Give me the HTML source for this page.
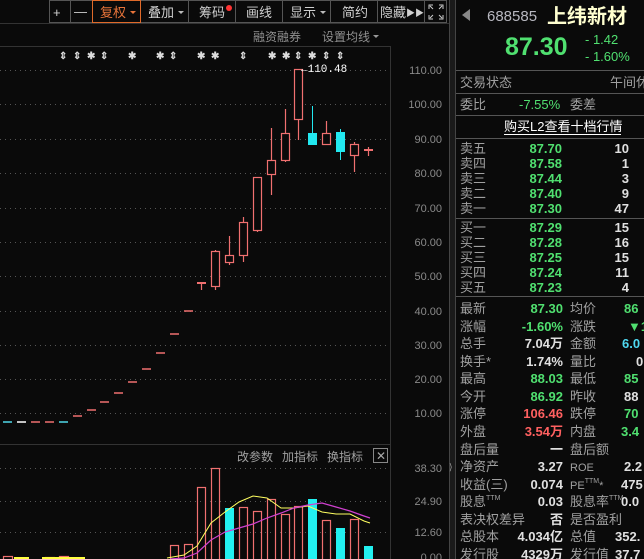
<!DOCTYPE html>
<html><head><meta charset="utf-8"><style>
body{margin:0;background:#0a0a0a;width:644px;height:559px;overflow:hidden;font-family:"Liberation Sans","Noto Sans CJK SC",sans-serif;}
svg text{font-family:"Liberation Sans","Noto Sans CJK SC",sans-serif;}
.m{font-family:"Liberation Mono","Noto Sans CJK SC",monospace;}
</style></head><body>
<svg width="644" height="559" xmlns="http://www.w3.org/2000/svg" style="position:absolute;left:0;top:0">
<rect width="644" height="559" fill="#0a0a0a"/>
<!-- toolbar -->
<g stroke="#555" fill="none">
<rect x="49.5" y="0.5" width="397" height="22"/>
<line x1="70.5" y1="0" x2="70.5" y2="23"/><line x1="92.5" y1="0" x2="92.5" y2="23"/>
<line x1="140.5" y1="0" x2="140.5" y2="23"/><line x1="188.5" y1="0" x2="188.5" y2="23"/>
<line x1="235.5" y1="0" x2="235.5" y2="23"/><line x1="282.5" y1="0" x2="282.5" y2="23"/>
<line x1="330.5" y1="0" x2="330.5" y2="23"/><line x1="377.5" y1="0" x2="377.5" y2="23"/>
<line x1="424.5" y1="0" x2="424.5" y2="23"/>
</g>
<rect x="92.5" y="0.5" width="48" height="22" fill="none" stroke="#e06a2a"/>
<g font-size="13" fill="#d0d0d0">
<text x="53" y="17">+</text><text x="74" y="16">—</text>
<text x="100" y="17" fill="#e8743a">复权</text><polygon points="130,11 136,11 133,14" fill="#e8743a"/>
<text x="148" y="17">叠加</text><polygon points="178,11 184,11 181,14" fill="#bbb"/>
<text x="199" y="17">筹码</text><circle cx="229" cy="8" r="3" fill="#f33"/>
<text x="246" y="17">画线</text>
<text x="290" y="17">显示</text><polygon points="320,11 326,11 323,14" fill="#bbb"/>
<text x="342" y="17">简约</text>
<text x="380" y="17">隐藏</text><text x="406" y="16" font-size="9">▶▶</text>
</g>
<g stroke="#ccc" stroke-width="1" fill="none"><path d="M429 9V5h4M443 9V5h-4M429 15v4h4M443 15v4h-4M430 6l3 3M442 6l-3 3M430 18l3-3M442 18l-3-3"/></g>
<line x1="0" y1="23.5" x2="449" y2="23.5" stroke="#333"/>
<text x="253" y="41" font-size="12" fill="#909090">融资融券</text>
<text x="322" y="41" font-size="12" fill="#909090">设置均线</text><polygon points="373,35 379,35 376,38" fill="#999"/>
<line x1="0" y1="46.5" x2="390" y2="46.5" stroke="#333"/>
<line x1="390.5" y1="46" x2="390.5" y2="559" stroke="#333"/>
<!-- markers -->
<g font-size="10" fill="#ddd" font-weight="bold">
<text x="59" y="59">⇕</text><text x="73" y="59">⇕</text><text x="87" y="59">✱</text><text x="100" y="59">⇕</text>
<text x="128" y="59">✱</text><text x="156" y="59">✱</text><text x="169" y="59">⇕</text><text x="197" y="59">✱</text><text x="211" y="59">✱</text>
<text x="239" y="59">⇕</text><text x="268" y="59">✱</text><text x="282" y="59">✱</text><text x="294" y="59">⇕</text><text x="308" y="59">✱</text><text x="322" y="59">⇕</text><text x="336" y="59">⇕</text>
</g>
<!-- grid -->
<g stroke="#555" stroke-dasharray="1,4">
<line x1="0" y1="70.5" x2="390" y2="70.5"/><line x1="0" y1="104.5" x2="390" y2="104.5"/><line x1="0" y1="139.5" x2="390" y2="139.5"/>
<line x1="0" y1="173.5" x2="390" y2="173.5"/><line x1="0" y1="208.5" x2="390" y2="208.5"/><line x1="0" y1="242.5" x2="390" y2="242.5"/>
<line x1="0" y1="276.5" x2="390" y2="276.5"/><line x1="0" y1="311.5" x2="390" y2="311.5"/><line x1="0" y1="345.5" x2="390" y2="345.5"/>
<line x1="0" y1="379.5" x2="390" y2="379.5"/><line x1="0" y1="413.5" x2="390" y2="413.5"/>
<line x1="0" y1="468.5" x2="390" y2="468.5"/><line x1="0" y1="501.5" x2="390" y2="501.5"/><line x1="0" y1="532.5" x2="390" y2="532.5"/>
</g>
<g font-size="11" fill="#8a8a8a" class="m" text-anchor="end">
<text x="442" y="74">110.00</text><text x="442" y="108">100.00</text><text x="442" y="143">90.00</text><text x="442" y="177">80.00</text>
<text x="442" y="212">70.00</text><text x="442" y="246">60.00</text><text x="442" y="280">50.00</text><text x="442" y="315">40.00</text>
<text x="442" y="349">30.00</text><text x="442" y="383">20.00</text><text x="442" y="417">10.00</text>
<text x="442" y="472">38.30</text><text x="442" y="505">24.90</text><text x="442" y="536">12.60</text><text x="442" y="561">0.00</text>
</g>
<!-- dashes -->
<g stroke-width="1.5">
<line x1="3" y1="422" x2="12" y2="422" stroke="#4fd8e8"/><line x1="17" y1="422" x2="26" y2="422" stroke="#fff"/>
<line x1="31" y1="422" x2="40" y2="422" stroke="#f07070"/><line x1="45" y1="422" x2="54" y2="422" stroke="#f07070"/>
<line x1="59" y1="422" x2="68" y2="422" stroke="#4fd8e8"/>
<g stroke="#f07070"><line x1="73" y1="416" x2="82" y2="416"/><line x1="87" y1="410" x2="96" y2="410"/><line x1="100" y1="402" x2="109" y2="402"/>
<line x1="114" y1="393" x2="123" y2="393"/><line x1="128" y1="382" x2="137" y2="382"/><line x1="142" y1="369" x2="151" y2="369"/>
<line x1="156" y1="353" x2="165" y2="353"/><line x1="170" y1="334" x2="179" y2="334"/><line x1="184" y1="311" x2="193" y2="311"/></g>
</g>
<!-- candles -->
<g stroke="#f07070" fill="none" stroke-width="1.2">
<line x1="197" y1="283" x2="206" y2="283" stroke-width="2"/><line x1="201.5" y1="283" x2="201.5" y2="290"/>
<line x1="215.5" y1="250" x2="215.5" y2="290"/><rect x="211.5" y="251.5" width="8" height="35" fill="#0a0a0a"/>
<line x1="229.5" y1="236" x2="229.5" y2="265"/><rect x="225.5" y="255.5" width="8" height="7" fill="#0a0a0a"/>
<line x1="243.5" y1="217" x2="243.5" y2="262"/><rect x="239.5" y="222.5" width="8" height="33" fill="#0a0a0a"/>
<line x1="257.5" y1="177" x2="257.5" y2="232"/><rect x="253.5" y="177.5" width="8" height="53" fill="#0a0a0a"/>
<line x1="271.5" y1="128" x2="271.5" y2="195"/><rect x="267.5" y="160.5" width="8" height="14" fill="#0a0a0a"/>
<line x1="285.5" y1="109" x2="285.5" y2="162"/><rect x="281.5" y="133.5" width="8" height="27" fill="#0a0a0a"/>
<line x1="298.5" y1="69" x2="298.5" y2="140"/><rect x="294.5" y="69.5" width="8" height="50" fill="#0a0a0a"/>
<line x1="326.5" y1="121" x2="326.5" y2="145"/><rect x="322.5" y="133.5" width="8" height="11" fill="#0a0a0a"/>
<line x1="354.5" y1="142" x2="354.5" y2="172"/><rect x="350.5" y="144.5" width="8" height="11" fill="#0a0a0a"/>
<line x1="364" y1="150" x2="373" y2="150" stroke-width="2"/><line x1="368.5" y1="147" x2="368.5" y2="156"/>
</g>
<line x1="312.5" y1="106" x2="312.5" y2="145" stroke="#22e8f0"/><rect x="308" y="133" width="9" height="12" fill="#22e8f0"/>
<line x1="340.5" y1="129" x2="340.5" y2="160" stroke="#22e8f0"/><rect x="336" y="132" width="9" height="20" fill="#22e8f0"/>
<text x="301" y="72" font-size="11" fill="#fff" class="m">←110.48</text>
<!-- volume pane -->
<line x1="0" y1="444.5" x2="390" y2="444.5" stroke="#333"/>
<g font-size="12" fill="#a0a0a0"><text x="237" y="461">改参数</text><text x="282" y="461">加指标</text><text x="327" y="461">换指标</text></g>
<rect x="373.5" y="448.5" width="14" height="14" fill="none" stroke="#888"/><text x="376" y="460" font-size="12" fill="#aaa">✕</text>
<g stroke="#f07070" fill="none" stroke-width="1.2">
<rect x="3.5" y="556.5" width="9" height="5"/><rect x="45.5" y="557.5" width="9" height="5"/><rect x="59.5" y="556.5" width="9" height="5"/>
<rect x="170.5" y="545.5" width="8" height="16"/><rect x="184.5" y="544.5" width="8" height="16"/>
<rect x="197.5" y="487.5" width="8" height="74"/><rect x="211.5" y="468.5" width="8" height="93"/>
<rect x="239.5" y="507.5" width="8" height="54"/><rect x="253.5" y="511.5" width="8" height="50"/>
<rect x="267.5" y="499.5" width="8" height="62"/><rect x="281.5" y="514.5" width="8" height="47"/>
<rect x="294.5" y="506.5" width="8" height="55"/><rect x="322.5" y="520.5" width="8" height="41"/>
<rect x="350.5" y="519.5" width="8" height="42"/>
</g>
<g fill="#22f0f0"><rect x="225" y="508" width="9" height="51"/><rect x="308" y="499" width="9" height="60"/><rect x="336" y="528" width="9" height="31"/><rect x="364" y="546" width="9" height="13"/></g>
<g stroke="#ffff40" stroke-width="2"><line x1="14" y1="558" x2="29" y2="558"/><line x1="42" y1="558" x2="85" y2="558"/></g>
<polyline points="167,558 184,555 197,546 211,523 225,512 239,502 253,496 267,498 281,508 294,508 308,506 322,512 336,514 350,514 364,521 370,523" fill="none" stroke="#ffff60" stroke-width="1"/>
<polyline points="170,559 184,558 197,553 211,540 225,532 239,528 253,524 267,518 281,513 294,508 308,505 322,503 336,507 350,511 364,516 370,518" fill="none" stroke="#d040d0" stroke-width="1.2"/>
<!-- right panel border -->
<rect x="449" y="0" width="6" height="559" fill="#1a1a1a"/>
<line x1="449.5" y1="0" x2="449.5" y2="559" stroke="#444"/><line x1="455.5" y1="0" x2="455.5" y2="559" stroke="#444"/>
<text x="449" y="470" font-size="9" fill="#999">⟩</text>
<polygon points="462,15 470,9 470,21" fill="#888"/>
<text x="487" y="21" font-size="15" fill="#b8b8c0">688585</text>
<text x="547" y="23" font-size="20" fill="#ffffd0" font-weight="bold">上纬新材</text>
<text x="505" y="55" font-size="25" fill="#50e070" font-weight="bold">87.30</text>
<g font-size="13" fill="#50e070"><text x="585" y="44">- 1.42</text><text x="585" y="61">- 1.60%</text></g>
<g stroke="#555"><line x1="456" y1="70.5" x2="644" y2="70.5"/><line x1="456" y1="93.5" x2="644" y2="93.5"/><line x1="456" y1="115.5" x2="644" y2="115.5"/><line x1="456" y1="138.5" x2="644" y2="138.5"/><line x1="456" y1="218.5" x2="644" y2="218.5"/><line x1="456" y1="296.5" x2="644" y2="296.5"/></g>
<g font-size="13" fill="#a0a0a0"><text x="460" y="87">交易状态</text><text x="610" y="87">午间休</text><text x="460" y="109">委比</text><text x="570" y="109">委差</text></g>
<text x="519" y="109" font-size="13" fill="#50e070">-7.55%</text>
<text x="504" y="131" font-size="13" fill="#fff">购买L2查看十档行情</text><line x1="504" y1="134.5" x2="621" y2="134.5" stroke="#fff"/>
<g font-size="13" fill="#a0a0a0">
<text x="460" y="153">卖五</text><text x="460" y="168">卖四</text><text x="460" y="183">卖三</text><text x="460" y="198">卖二</text><text x="460" y="213">卖一</text>
<text x="460" y="232">买一</text><text x="460" y="247">买二</text><text x="460" y="262">买三</text><text x="460" y="277">买四</text><text x="460" y="292">买五</text>
</g>
<g font-size="13" fill="#50e070" text-anchor="end" class="m" font-weight="bold">
<text x="562" y="153">87.70</text><text x="562" y="168">87.58</text><text x="562" y="183">87.44</text><text x="562" y="198">87.40</text><text x="562" y="213">87.30</text>
<text x="562" y="232">87.29</text><text x="562" y="247">87.28</text><text x="562" y="262">87.25</text><text x="562" y="277">87.24</text><text x="562" y="292">87.23</text>
</g>
<g font-size="13" fill="#e0e0e0" text-anchor="end" class="m" font-weight="bold">
<text x="629" y="153">10</text><text x="629" y="168">1</text><text x="629" y="183">3</text><text x="629" y="198">9</text><text x="629" y="213">47</text>
<text x="629" y="232">15</text><text x="629" y="247">16</text><text x="629" y="262">15</text><text x="629" y="277">11</text><text x="629" y="292">4</text>
</g>
<g font-size="13" fill="#a0a0a0">
<text x="460" y="313">最新</text><text x="460" y="331">涨幅</text><text x="460" y="348">总手</text><text x="460" y="366">换手*</text><text x="460" y="383">最高</text>
<text x="460" y="401">今开</text><text x="460" y="418">涨停</text><text x="460" y="436">外盘</text><text x="460" y="454">盘后量</text><text x="460" y="471">净资产</text>
<text x="460" y="489">收益(三)</text><text x="460" y="506">股息<tspan font-size="7" dy="-6">TTM</tspan></text><text x="460" y="524">表决权差异</text><text x="460" y="541">总股本</text><text x="460" y="559">发行股</text>
<text x="570" y="313">均价</text><text x="570" y="331">涨跌</text><text x="570" y="348">金额</text><text x="570" y="366">量比</text><text x="570" y="383">最低</text>
<text x="570" y="401">昨收</text><text x="570" y="418">跌停</text><text x="570" y="436">内盘</text><text x="570" y="454">盘后额</text><text x="570" y="471" font-size="11">ROE</text>
<text x="570" y="489" font-size="11">PE<tspan font-size="7" dy="-6">TTM</tspan><tspan dy="6">*</tspan></text><text x="570" y="506">股息率<tspan font-size="7" dy="-6">TTM</tspan></text><text x="570" y="524">是否盈利</text><text x="570" y="541">总值</text><text x="570" y="559">发行值</text>
</g>
<g font-size="13" text-anchor="end" class="m" font-weight="bold">
<text x="563" y="313" fill="#50e070">87.30</text><text x="563" y="331" fill="#50e070">-1.60%</text><text x="563" y="348" fill="#e0e0e0">7.04万</text>
<text x="563" y="366" fill="#e0e0e0">1.74%</text><text x="563" y="383" fill="#50e070">88.03</text><text x="563" y="401" fill="#50e070">86.92</text>
<text x="563" y="418" fill="#ff6060">106.46</text><text x="563" y="436" fill="#ff6060">3.54万</text><text x="563" y="454" fill="#e0e0e0">一</text>
<text x="563" y="471" fill="#e0e0e0">3.27</text><text x="563" y="489" fill="#e0e0e0">0.074</text><text x="563" y="506" fill="#e0e0e0">0.03</text>
<text x="563" y="524" fill="#e0e0e0">否</text><text x="563" y="541" fill="#e0e0e0">4.034亿</text><text x="563" y="559" fill="#e0e0e0">4329万</text>
</g>
<g font-size="13" class="m" font-weight="bold">
<text x="624" y="313" fill="#50e070">86</text><text x="628" y="331" fill="#50e070">▼1</text><text x="622" y="348" fill="#4fd8f0">6.0</text>
<text x="636" y="366" fill="#e0e0e0">0</text><text x="624" y="383" fill="#50e070">85</text><text x="624" y="401" fill="#e0e0e0">88</text>
<text x="624" y="418" fill="#50e070">70</text><text x="621" y="436" fill="#50e070">3.4</text><text x="624" y="471" fill="#e0e0e0">2.2</text>
<text x="621" y="489" fill="#e0e0e0">475</text><text x="621" y="506" fill="#e0e0e0">0.0</text><text x="615" y="541" fill="#e0e0e0">352.</text><text x="615" y="559" fill="#e0e0e0">37.7</text>
</g>
</svg>
</body></html>
